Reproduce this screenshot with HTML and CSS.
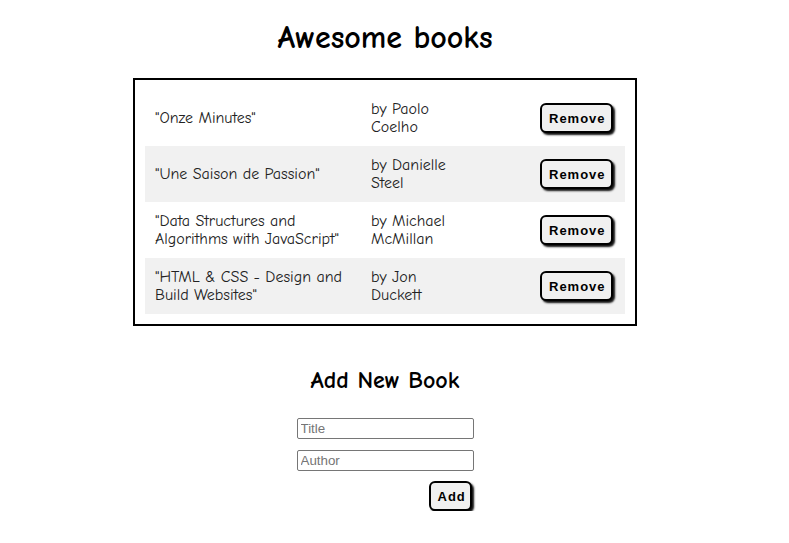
FILE: index.html
```html
<!DOCTYPE html>
<html>
<head>
<meta charset="utf-8">
<link rel="stylesheet" href="styles.css">
</head>
<body>
<h1 class="title">Awesome books</h1>
<section class="books">
  <div class="book">
    <span class="book-title">"Onze Minutes"</span>
    <span class="book-author">by Paolo Coelho</span>
    <span class="book-action"><button class="btn">Remove</button></span>
  </div>
  <div class="book alt">
    <span class="book-title">"Une Saison de Passion"</span>
    <span class="book-author">by Danielle Steel</span>
    <span class="book-action"><button class="btn">Remove</button></span>
  </div>
  <div class="book">
    <span class="book-title">"Data Structures and Algorithms with JavaScript"</span>
    <span class="book-author">by Michael McMillan</span>
    <span class="book-action"><button class="btn">Remove</button></span>
  </div>
  <div class="book alt">
    <span class="book-title">"HTML &amp; CSS - Design and Build Websites"</span>
    <span class="book-author">by Jon Duckett</span>
    <span class="book-action"><button class="btn">Remove</button></span>
  </div>
</section>
<section class="add">
  <h2 class="add-title">Add New Book</h2>
  <form class="add-form">
    <input class="field" type="text" placeholder="Title">
    <input class="field" type="text" placeholder="Author">
    <button class="btn btn-add" type="button">Add</button>
  </form>
</section>
</body>
</html>
```
FILE: styles.css
```css
* { box-sizing: border-box; }
body {
  margin: 0;
  padding-right: 19px;
  font-family: "Comic Neue", Lato, "Open Sans", sans-serif;
  color: #000;
  background: #fff;
  display: flex;
  flex-direction: column;
  align-items: center;
}
.title {
  margin: 18px 0 20px;
  font-family: "Comic Neue", "Open Sans", sans-serif;
  font-size: 32px;
  font-weight: 700;
  line-height: 40px;
}
.books {
  width: 504px;
  border: 2px solid #000;
  padding: 10px;
}
.book {
  display: grid;
  grid-template-columns: 216px 100px 1fr;
  align-items: center;
  height: 56px;
  font-size: 16px;
  line-height: 18px;
  color: #222;
}
.book.alt { background: #f1f1f1; }
.book-title, .book-author { padding-left: 10px; }
.book-action { justify-self: end; padding-right: 12px; display: flex; }
.btn {
  font-family: "Liberation Sans", Arial, sans-serif;
  font-weight: bold;
  font-size: 13px;
  letter-spacing: 1px;
  color: #000;
  background: #f0f0f0;
  border: 2px solid #000;
  border-radius: 6px;
  box-shadow: 2px 2px 2px #111;
  padding: 0 6px 0 7px;
  height: 30px;
  width: 73px;
}
.add {
  display: flex;
  flex-direction: column;
  align-items: center;
  margin-top: 39px;
}
.add-title {
  margin: 0 0 23px;
  font-size: 24px;
  font-weight: 700;
  line-height: 30px;
}
.add-form {
  width: 177px;
  display: flex;
  flex-direction: column;
  align-items: flex-end;
}
.field {
  width: 177px;
  height: 21px;
  border: 1px solid #767676;
  border-radius: 2px;
  padding: 1px 3px;
  font-family: "Liberation Sans", Arial, sans-serif;
  font-size: 13.333px;
  margin-bottom: 11px;
}
.field::placeholder { color: #757575; }
.btn-add { width: 43px; margin-right: 2px; margin-top: -1px; }
```
